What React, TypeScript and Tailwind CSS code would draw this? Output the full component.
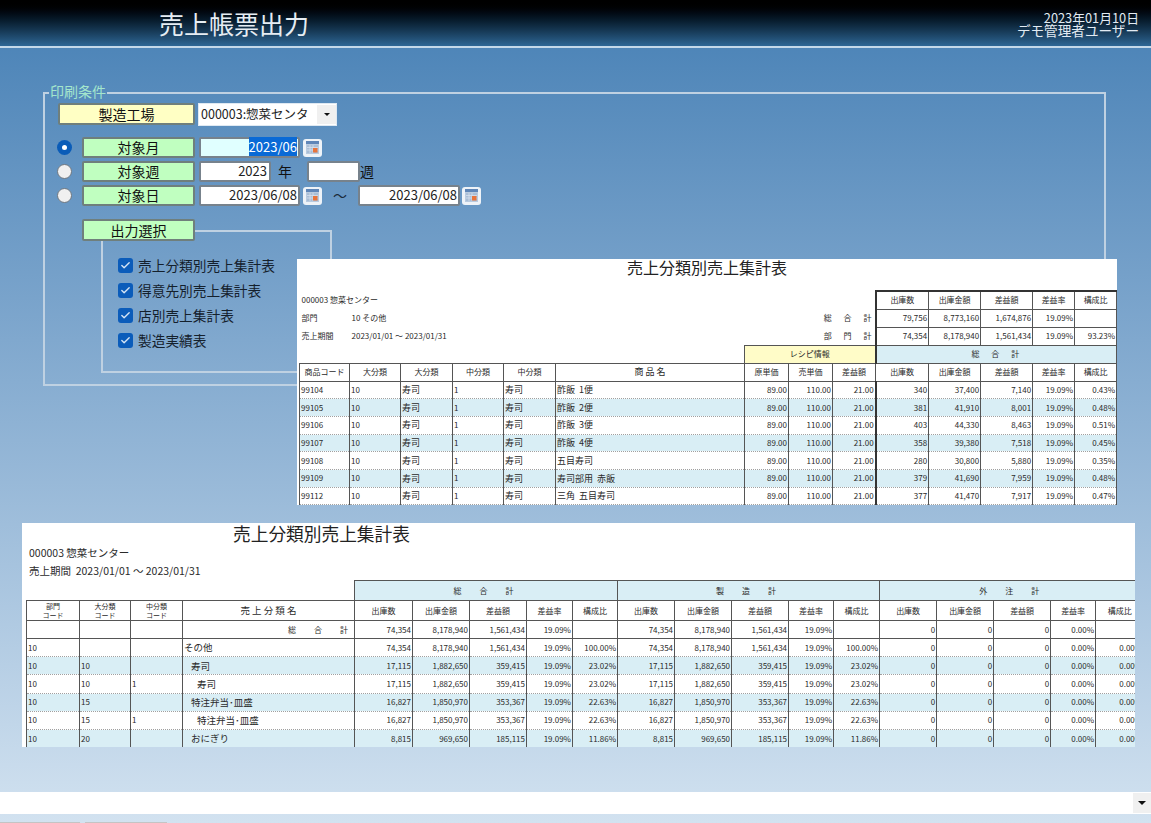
import { Check } from "lucide-react"

const jp = "font-['Noto_Sans_CJK_JP',sans-serif]"

const CalendarIcon = () => (
  <div className="w-[19px] h-[18px] rounded-[3px] bg-[#eef3f8] flex items-center justify-center shrink-0">
    <svg width="13" height="13" viewBox="0 0 13 13">
      <rect x="0" y="0" width="13" height="13" fill="#b9cbe0" />
      <rect x="0" y="0" width="13" height="3" fill="#5f86b8" />
      <rect x="1" y="4" width="11" height="8" fill="#a9bed6" />
      <path d="M1 6.5h11M1 9h11M4 4v8M7 4v8" stroke="#dbe5f0" strokeWidth="0.7" />
      <rect x="7" y="7" width="4.5" height="4.5" fill="#e8743c" />
    </svg>
  </div>
)

const Label = ({ children, className }: { children: string; className: string }) => (
  <div className={`flex items-center justify-center border-2 border-[#6f7f7c] rounded-[2px] text-[14px] text-[#111] shrink-0 ${className}`}>
    {children}
  </div>
)

const Field = ({ children, className }: { children?: React.ReactNode; className: string }) => (
  <div className={`h-full border-2 border-[#77828c] rounded-[2px] text-right text-[13px] leading-[15px] text-[#222] shrink-0 ${className}`}>
    {children}
  </div>
)

const Radio = ({ on }: { on?: boolean }) =>
  on ? (
    <div className="w-[15px] h-[15px] -ml-[1px] rounded-full bg-[#0a5cb8] flex items-center justify-center shrink-0">
      <div className="w-[5px] h-[5px] rounded-full bg-white" />
    </div>
  ) : (
    <div className="w-[15px] h-[15px] -ml-[1px] rounded-full bg-[#f0f0f0] border border-[#6f7780] shrink-0" />
  )

const CheckRow = ({ label }: { label: string }) => (
  <div className="flex items-center gap-[5px] h-[25px]">
    <div className="w-[15px] h-[15px] rounded-[3px] bg-[#0b5cba] flex items-center justify-center">
      <Check size={11} strokeWidth={3} className="text-[#d5e4f5]" />
    </div>
    <span className="text-[13.7px] text-[#14202c]">{label}</span>
  </div>
)

// shared table cell styles
const line = "border-r border-[#555]"
const head = `${line} border-b border-b-[#555] text-center align-middle overflow-hidden`
const dotted = "border-b border-b-[#a0a0a0] [border-bottom-style:dotted]"
const num = `${line} ${dotted} text-right pr-[1px] align-middle overflow-hidden`
const txt = `${line} ${dotted} text-left pl-[1px] align-middle overflow-hidden whitespace-nowrap`

const r1Cols = [50, 51, 52, 51, 52, 189, 44, 44, 43, 53, 52, 52, 42, 42]
const r1Heads = ["商品コード", "大分類", "大分類", "中分類", "中分類", "商 品 名", "原単価", "売単価", "差益額", "出庫数", "出庫金額", "差益額", "差益率", "構成比"]
const r1SumHeads = ["出庫数", "出庫金額", "差益額", "差益率", "構成比"]
const r1Rows = [
  ["99104", "酢飯  1便", "340", "37,400", "7,140", "0.43%"],
  ["99105", "酢飯  2便", "381", "41,910", "8,001", "0.48%"],
  ["99106", "酢飯  3便", "403", "44,330", "8,463", "0.51%"],
  ["99107", "酢飯  4便", "358", "39,380", "7,518", "0.45%"],
  ["99108", "五目寿司", "280", "30,800", "5,880", "0.35%"],
  ["99109", "寿司部用  赤飯", "379", "41,690", "7,959", "0.48%"],
  ["99112", "三角  五目寿司", "377", "41,470", "7,917", "0.47%"],
]

const MetaRow = ({ label, value }: { label: string; value?: string }) => (
  <span className="flex pl-[2px]">
    <span className={value ? "w-[50px]" : ""}>{label}</span>
    {value && <span>{value}</span>}
  </span>
)

const ReportOne = () => (
  <div className={`absolute left-[297px] top-[259px] w-[820px] h-[246px] bg-white overflow-hidden pl-[2px] text-[8px] text-[#2a2a2a] ${jp}`}>
    <div className="h-[31px] -ml-[2px] text-center text-[16px] leading-[16px] text-[#222]">売上分類別売上集計表</div>
    <table className="table-fixed border-collapse w-[817px]">
      <colgroup>
        {r1Cols.map((w, i) => (
          <col key={i} style={{ width: w }} />
        ))}
      </colgroup>
      <tbody>
        <tr className="h-[18px]">
          <td colSpan={9} className="border-r-2 border-[#333]">
            <MetaRow label="000003 惣菜センター" />
          </td>
          {r1SumHeads.map((h) => (
            <td key={h} className={`${head} border-t-2 border-t-[#333]`}>{h}</td>
          ))}
        </tr>
        <tr className="h-[18px]">
          <td colSpan={9} className="border-r-2 border-[#333]">
            <div className="flex justify-between pr-[1px]">
              <MetaRow label="部門" value="10 その他" />
              <span className="tracking-[2px]">総　合　計</span>
            </div>
          </td>
          {["79,756", "8,773,160", "1,674,876", "19.09%", ""].map((v, i) => (
            <td key={i} className={`${head} text-right! pr-[1px]`}>{v}</td>
          ))}
        </tr>
        <tr className="h-[18px]">
          <td colSpan={9} className="border-r-2 border-[#333]">
            <div className="flex justify-between pr-[1px]">
              <MetaRow label="売上期間" value="2023/01/01 ～ 2023/01/31" />
              <span className="tracking-[2px]">部　門　計</span>
            </div>
          </td>
          {["74,354", "8,178,940", "1,561,434", "19.09%", "93.23%"].map((v, i) => (
            <td key={i} className={`${head} text-right! pr-[1px]`}>{v}</td>
          ))}
        </tr>
        <tr className="h-[18px]">
          <td colSpan={6} className="border-r border-b border-[#555]" />
          <td colSpan={3} className={`${head} border-t border-t-[#555] border-r-2 border-r-[#333] bg-[#fffcc8]`}>レシピ情報</td>
          <td colSpan={5} className={`${head} bg-[#d9eef5] tracking-[2px]`}>総　合　計</td>
        </tr>
        <tr className="h-[18px]">
          {r1Heads.map((h, i) => (
            <td key={i} className={`${head} ${i === 0 ? "border-l border-l-[#555]" : ""} ${i === 5 ? "text-[9px]" : ""}`}>{h}</td>
          ))}
        </tr>
        {r1Rows.map((r, i) => (
          <tr key={r[0]} className={`h-[17.7px] ${i % 2 === 1 ? "bg-[#d9eef5]" : "bg-white"}`}>
            <td className={`${txt} border-l border-l-[#555]`}>{r[0]}</td>
            <td className={txt}>10</td>
            <td className={`${txt} text-[9px]`}>寿司</td>
            <td className={txt}>1</td>
            <td className={`${txt} text-[9px]`}>寿司</td>
            <td className={`${txt} text-[9px] whitespace-pre`}>{r[1]}</td>
            <td className={num}>89.00</td>
            <td className={num}>110.00</td>
            <td className={`${num} border-r-2 border-r-[#333]`}>21.00</td>
            <td className={num}>{r[2]}</td>
            <td className={num}>{r[3]}</td>
            <td className={num}>{r[4]}</td>
            <td className={num}>19.09%</td>
            <td className={num}>{r[5]}</td>
          </tr>
        ))}
        <tr className="h-[17.7px]">
          {r1Cols.map((_, i) => (
            <td key={i} className={`${line} ${i === 0 ? "border-l border-l-[#555]" : ""}`} />
          ))}
        </tr>
      </tbody>
    </table>
  </div>
)

const r2Cols = [53, 51, 52, 172, 58, 57, 57, 46, 45, 57, 57, 57, 45, 46, 57, 57, 57, 45, 48]
const r2Metric = ["出庫数", "出庫金額", "差益額", "差益率", "構成比"]
const r2Rows = [
  { a: "10", b: "", c: "", name: "その他", indent: "", v: ["74,354", "8,178,940", "1,561,434", "19.09%", "100.00%"] },
  { a: "10", b: "10", c: "", name: "寿司", indent: "pl-[7px]", v: ["17,115", "1,882,650", "359,415", "19.09%", "23.02%"] },
  { a: "10", b: "10", c: "1", name: "寿司", indent: "pl-[13px]", v: ["17,115", "1,882,650", "359,415", "19.09%", "23.02%"] },
  { a: "10", b: "15", c: "", name: "特注弁当･皿盛", indent: "pl-[7px]", v: ["16,827", "1,850,970", "353,367", "19.09%", "22.63%"] },
  { a: "10", b: "15", c: "1", name: "特注弁当･皿盛", indent: "pl-[13px]", v: ["16,827", "1,850,970", "353,367", "19.09%", "22.63%"] },
  { a: "10", b: "20", c: "", name: "おにぎり", indent: "pl-[7px]", v: ["8,815", "969,650", "185,115", "19.09%", "11.86%"] },
]

const ReportTwo = () => (
  <div className={`absolute left-[22px] top-[523px] w-[1113px] h-[224px] bg-white overflow-hidden pl-[4px] text-[8px] text-[#2a2a2a] ${jp}`}>
    <div className="h-[20px] pl-[207px] text-[17.7px] leading-[20px] whitespace-nowrap text-[#222]">売上分類別売上集計表</div>
    <div className="h-[19px] flex items-center pl-[3px] text-[10.5px]">000003 惣菜センター</div>
    <div className="h-[18px] flex items-center pl-[3px] text-[10.5px]">売上期間&nbsp;&nbsp;2023/01/01 ～ 2023/01/31</div>
    <table className="table-fixed border-collapse w-[1117px]">
      <colgroup>
        {r2Cols.map((w, i) => (
          <col key={i} style={{ width: w }} />
        ))}
      </colgroup>
      <tbody>
        <tr className="h-[20px]">
          <td colSpan={4} className="border-r border-[#555]" />
          {["総　合　計", "製　造　計", "外　注　計"].map((t) => (
            <td key={t} colSpan={5} className={`${head} border-t border-t-[#555] bg-[#d9eef5] tracking-[5px]`}>{t}</td>
          ))}
        </tr>
        <tr className="h-[20px]">
          {["部門", "大分類", "中分類"].map((t, i) => (
            <td key={t} className={`${head} border-t border-t-[#555] text-[7px] leading-[9px] ${i === 0 ? "border-l border-l-[#555]" : ""}`}>
              {t}
              <br />
              コード
            </td>
          ))}
          <td className={`${head} border-t border-t-[#555] text-[9.5px]`}>売 上 分 類 名</td>
          {[...r2Metric, ...r2Metric, ...r2Metric].map((h, i) => (
            <td key={i} className={head}>{h}</td>
          ))}
        </tr>
        <tr className="h-[18px]">
          <td className={`${head} border-l border-l-[#555]`} />
          <td className={head} />
          <td className={head} />
          <td className={`${head} text-right! pr-[1px] tracking-[5px]`}>総　合　計</td>
          {["74,354", "8,178,940", "1,561,434", "19.09%", "", "74,354", "8,178,940", "1,561,434", "19.09%", "", "0", "0", "0", "0.00%", ""].map((v, i) => (
            <td key={i} className={`${head} text-right! pr-[1px]`}>{v}</td>
          ))}
        </tr>
        {r2Rows.map((r, i) => (
          <tr key={i} className={`h-[18.2px] ${i % 2 === 1 ? "bg-[#d9eef5]" : "bg-white"}`}>
            <td className={`${txt} border-l border-l-[#555]`}>{r.a}</td>
            <td className={txt}>{r.b}</td>
            <td className={txt}>{r.c}</td>
            <td className={`${txt} text-[9.5px]`}>
              <span className={r.indent}>{r.name}</span>
            </td>
            {r.v.map((v, j) => (
              <td key={j} className={num}>{v}</td>
            ))}
            {r.v.map((v, j) => (
              <td key={j} className={num}>{v}</td>
            ))}
            <td className={num}>0</td>
            <td className={num}>0</td>
            <td className={num}>0</td>
            <td className={num}>0.00%</td>
            <td className={num}>0.00%</td>
          </tr>
        ))}
      </tbody>
    </table>
  </div>
)

export default function App() {
  return (
    <div className={`relative w-[1151px] h-[823px] overflow-hidden flex flex-col bg-gradient-to-b from-[#4680b5] to-[#d2e2f0] ${jp}`}>
      {/* header */}
      <header className="h-[46px] shrink-0 flex items-center justify-between pl-[159px] pr-[12px] bg-gradient-to-b from-black to-[#2e6796]">
        <h1 className="text-[25px] leading-none font-normal text-[#e6edf3]">売上帳票出力</h1>
        <div className="pt-[2px] text-right leading-[13px] text-[#e2ebf3]">
          <div className="text-[12.8px]">2023年01月10日</div>
          <div className="text-[13.6px]">デモ管理者ユーザー</div>
        </div>
      </header>
      <div className="h-[2px] shrink-0 bg-[#c4d9ea]" />

      <main className="flex-1">
        <fieldset className="mt-[35px] ml-[43px] w-[1063px] h-[303px] border-2 border-[#bfd1e2]">
          <legend className="ml-[4px] px-[1px] h-[20px] text-[14px] leading-[17px] text-[#a4e6cc]">印刷条件</legend>
          <div className="pl-[13px]">
            <div className="flex h-[23px]">
              <Label className="w-[137px] h-[22px] bg-[#ffffc4]">製造工場</Label>
              <div className="ml-[3px] w-[139px] bg-white border border-[#dfe9f2] flex items-center pl-[2px] shrink-0">
                <span className="flex-1 overflow-hidden whitespace-nowrap text-[12.5px] text-[#222]">000003:惣菜センタ</span>
                <span className="w-[19px] h-[19px] bg-[#f0f0f0] flex items-center justify-center shrink-0">
                  <span className="border-x-[3px] border-t-[3px] border-x-transparent border-t-[#111]" />
                </span>
              </div>
            </div>

            <div className="mt-[11px] flex items-center h-[21px]">
              <Radio on />
              <Label className="ml-[10px] w-[113px] h-full bg-[#c0ffc0]">対象月</Label>
              <Field className="ml-[4px] w-[101px] bg-[#e0ffff] pr-[1px]">
                <span className="bg-[#0a6ad6] text-white">2023/06</span>
              </Field>
              <div className="ml-[3px]">
                <CalendarIcon />
              </div>
            </div>

            <div className="mt-[3px] flex items-center h-[21px]">
              <Radio />
              <Label className="ml-[10px] w-[113px] h-full bg-[#c0ffc0]">対象週</Label>
              <Field className="ml-[4px] w-[72px] bg-white pr-[2px]">2023</Field>
              <span className="ml-[7px] w-[14px] text-[14px] text-[#111] shrink-0">年</span>
              <Field className="ml-[15px] w-[53px] bg-white" />
              <span className="w-[14px] text-[14px] text-[#111] shrink-0">週</span>
            </div>

            <div className="mt-[3px] flex items-center h-[21px]">
              <Radio />
              <Label className="ml-[10px] w-[113px] h-full bg-[#c0ffc0]">対象日</Label>
              <Field className="ml-[4px] w-[101px] bg-white pr-[1px]">2023/06/08</Field>
              <div className="ml-[3px]">
                <CalendarIcon />
              </div>
              <span className="ml-[11px] w-[14px] text-[14px] text-[#1a2a3a] shrink-0">～</span>
              <Field className="ml-[11px] w-[102px] bg-white pr-[1px]">2023/06/08</Field>
              <div className="ml-[2px]">
                <CalendarIcon />
              </div>
            </div>

            <Label className="relative z-10 mt-[13px] ml-[24px] w-[113px] h-[22px] bg-[#c0ffc0]">出力選択</Label>
            <div className="-mt-[11px] ml-[43px] w-[231px] h-[143px] border-2 border-[#bfd1e2] pt-[21px] pl-[15px]">
              <CheckRow label="売上分類別売上集計表" />
              <CheckRow label="得意先別売上集計表" />
              <CheckRow label="店別売上集計表" />
              <CheckRow label="製造実績表" />
            </div>
          </div>
        </fieldset>
      </main>

      <footer className="h-[22px] shrink-0 bg-white flex justify-end items-center">
        <div className="w-[18px] h-[20px] bg-[#f0f0f0] flex items-center justify-center">
          <span className="border-x-[4px] border-t-[4px] border-x-transparent border-t-[#111]" />
        </div>
      </footer>
      <div className="h-[9px] shrink-0 flex items-end gap-[5px]">
        <div className="w-[80px] h-[1px] bg-[#c4c4c4]" />
        <div className="w-[82px] h-[1px] bg-[#c4c4c4]" />
      </div>

      <ReportOne />
      <ReportTwo />
    </div>
  )
}
